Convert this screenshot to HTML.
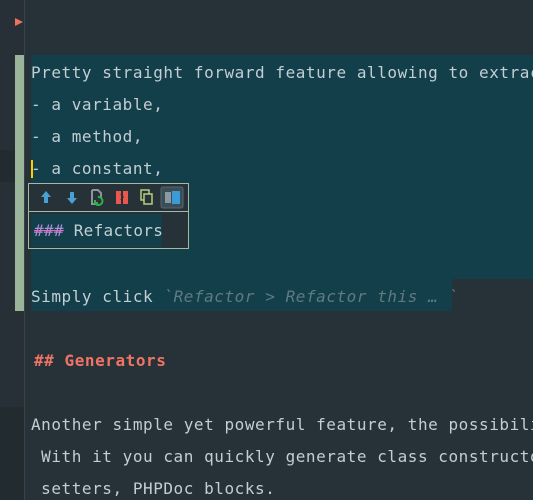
<!DOCTYPE html>
<html><head><style>
html,body{margin:0;padding:0;width:533px;height:500px;overflow:hidden;background:#263238;}
#w{position:relative;width:533px;height:500px;overflow:hidden;font-family:"DejaVu Sans Mono","Liberation Mono",monospace;font-size:16px;letter-spacing:0.55px;color:#c3ced4;}
.g{position:absolute;left:0;top:0;width:24px;height:500px;background:#263036;}
.sep{position:absolute;left:24px;top:0;width:1px;height:500px;background:#37434a;}
.band{position:absolute;left:0;top:150px;width:24px;height:32px;background:#222b30;}
.band2{position:absolute;left:0;top:407px;width:24px;height:93px;background:#222b30;}
.bar{position:absolute;left:15px;top:55px;width:9px;height:256px;background:#9bb59b;}
.sel{position:absolute;left:31px;top:55px;width:502px;height:224px;background:#133f4a;}
.sel2{position:absolute;left:31px;top:279px;width:421px;height:32px;background:#133f4a;}
.l{position:absolute;left:31px;right:0;overflow:hidden;white-space:pre;line-height:32px;height:32px;}
.it{color:#5f7a82;font-style:italic;}
.h{color:#f07366;font-weight:bold;}
.caret{position:absolute;left:31px;top:160px;width:2px;height:18px;background:#ffcc00;}
.tri{position:absolute;left:15px;top:18px;width:0;height:0;border-left:8px solid #f0705f;border-top:4px solid transparent;border-bottom:4px solid transparent;}
.pop{position:absolute;left:28px;top:183px;width:159px;height:64px;border:1px solid #a8b9a3;background:#263238;}
.pop .sp{position:absolute;left:0;top:27px;width:159px;height:1px;background:#a8b9a3;}
.pop .ct{position:absolute;left:2px;top:30px;width:131px;height:33px;background:#133f4a;}
</style></head><body><div id="w">
<div class="g"></div><div class="band"></div><div class="band2"></div><div class="sep"></div>
<div class="tri"></div>
<div class="sel"></div><div class="sel2"></div>
<div class="bar"></div>
<div class="l" style="top:57px">Pretty straight forward feature allowing to extract</div>
<div class="l" style="top:89px">- a variable,</div>
<div class="l" style="top:121px">- a method,</div>
<div class="l" style="top:153px">- a constant,</div>
<div class="caret"></div>
<div class="l" style="top:217px">- a parameter,</div>
<div class="l" style="top:281px">Simply click <span class="it">`Refactor &gt; Refactor this … `</span></div>
<div class="l h" style="top:345px;left:34px">## Generators</div>
<div class="l" style="top:409px">Another simple yet powerful feature, the possibility</div>
<div class="l" style="top:441px"> With it you can quickly generate class constructors</div>
<div class="l" style="top:473px"> setters, PHPDoc blocks.</div>
<div class="pop">
 <svg width="159" height="27" style="position:absolute;left:0;top:0">
  <path d="M17 7 l-5 6 h3 v6 h4 v-6 h3z" fill="#4a9fd4"/>
  <path d="M43 20 l-5 -6 h3 v-6 h4 v6 h3z" fill="#4a9fd4"/>
  <path d="M63 6 h6 l3 3 v5 M63 6 v14 h4" stroke="#8a9499" stroke-width="2" fill="none"/>
  <path d="M69 13 a4 4 0 1 1 -3 6 M66 16 v3 h3" stroke="#2fb14a" stroke-width="2" fill="none"/>
  <rect x="87" y="7" width="5" height="13" fill="#e8584f"/><rect x="94" y="7" width="5" height="13" fill="#e8584f"/>
  <path d="M92 10 l2 3 l-2 3" stroke="#263238" stroke-width="1.5" fill="none"/>
  <rect x="112" y="6" width="8" height="10" stroke="#b5d07a" stroke-width="1.5" fill="none"/>
  <rect x="115" y="10" width="8" height="10" stroke="#b5d07a" stroke-width="1.5" fill="#263238"/>
  <rect x="132" y="3" width="22" height="21" rx="2" fill="#3c4d57" stroke="#56666f"/>
  <rect x="136" y="8" width="6" height="11" fill="#8a9aa2"/><rect x="143" y="7" width="8" height="13" fill="#3b9ad8"/>
 </svg>
 <div class="sp"></div>
 <div class="ct"></div>
 <div style="position:absolute;left:5px;top:31px;line-height:32px;white-space:pre;letter-spacing:0.3px"><span style="color:#b48ae0;text-decoration:line-through;text-decoration-color:#e070a0">###</span> Refactors</div>
</div>
</div></body></html>
